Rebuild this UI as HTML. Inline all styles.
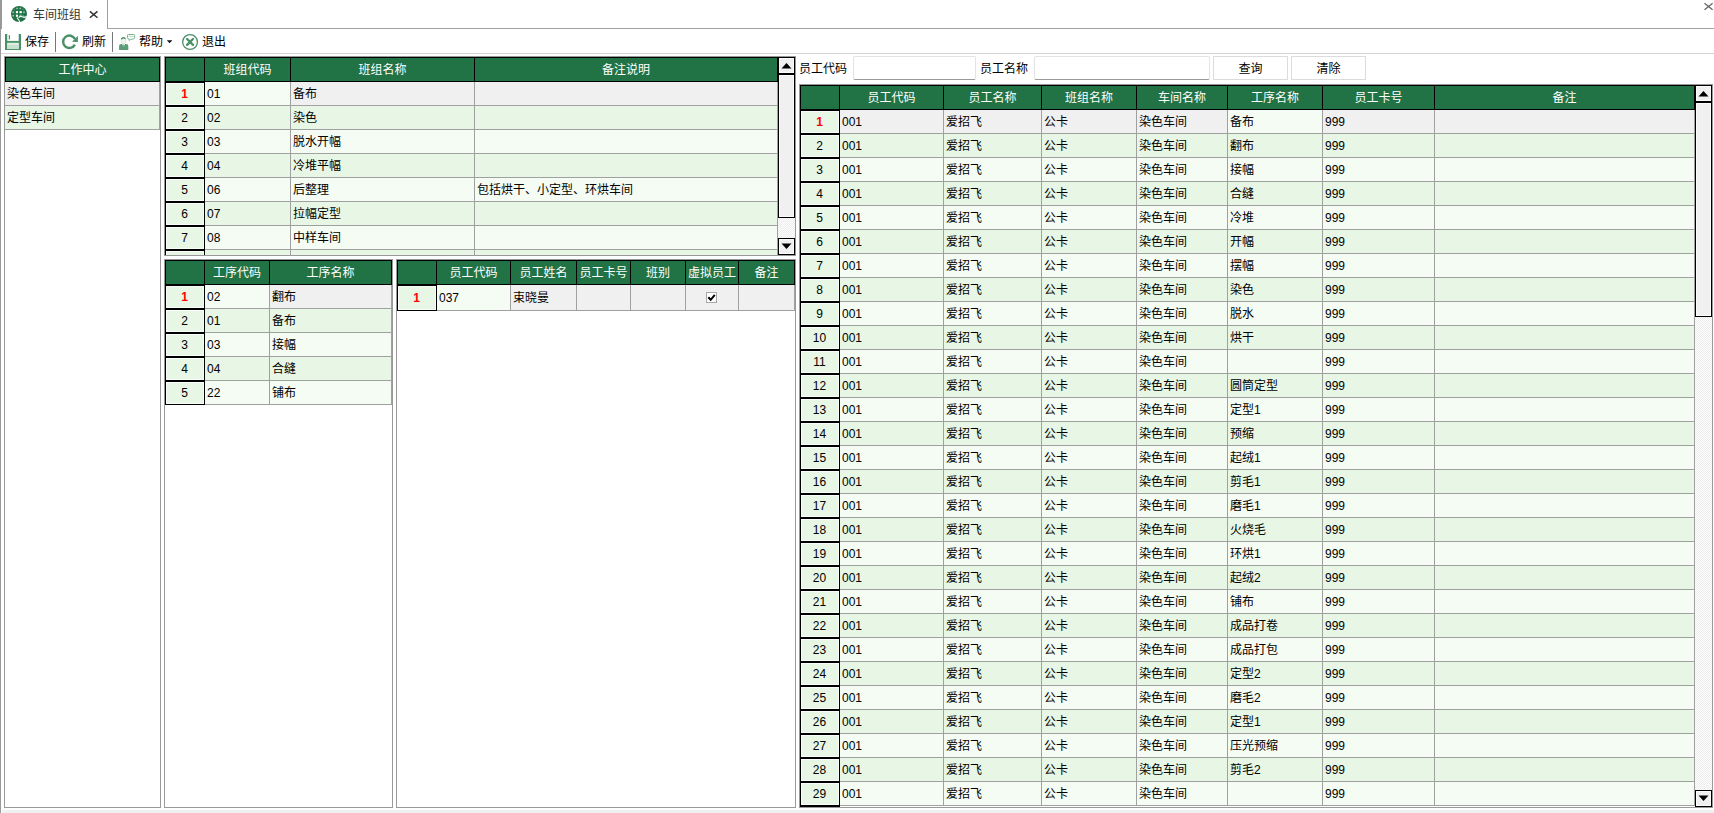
<!DOCTYPE html>
<html lang="zh-CN"><head><meta charset="utf-8"><title>车间班组</title>
<style>
html,body{margin:0;padding:0;background:#fff;}
body{width:1714px;height:813px;position:relative;overflow:hidden;font-family:"Liberation Sans","Noto Sans CJK SC",sans-serif;font-size:12px;color:#000;}
div{position:absolute;box-sizing:content-box;}
.grid{border:1px solid #999;background:#fff;overflow:hidden;}
.hc{background:#217346;color:#fff;text-align:center;line-height:25px;white-space:nowrap;overflow:hidden;}
.c{line-height:25px;padding-left:2px;white-space:nowrap;overflow:hidden;box-sizing:border-box;}
.rh{text-align:center;line-height:22px;font-size:12px;overflow:hidden;box-shadow:inset 0 0 0 1px rgba(255,255,255,.75);padding-right:1px;box-sizing:border-box;}
.r1{color:#f00;font-weight:bold;}
.vs{background:repeating-conic-gradient(#fff 0% 25%,#ececec 0% 50%) 0 0/2px 2px;}
.sl{background:#a0a0a0;}
.sb{background:#f0f0f0;border:1px solid #000;box-shadow:inset 0 0 0 1px rgba(255,255,255,.7);}
.sb svg{display:block}
.t{white-space:nowrap;line-height:16px;}
.inp{background:#fff;border:1px solid #e3e3e3;border-bottom:1px solid #9a9a9a;border-radius:2px;}
.btn{background:#fff;border:1px solid #dcdcdc;text-align:center;line-height:24px;}
</style></head><body>

<div style="left:0px;top:0px;width:1px;height:813px;background:#999"></div>
<div style="left:0px;top:0px;width:2px;height:29px;background:#999"></div>
<div style="left:107px;top:28px;width:1607px;height:1px;background:#a0a0a0"></div>
<div style="left:107px;top:0px;width:1px;height:29px;background:#a0a0a0"></div>
<div style="left:1px;top:53px;width:1713px;height:1px;background:#d4d4d4"></div>
<div style="left:2px;top:810px;width:1712px;height:3px;background:#f0f0f0"></div>
<svg style="position:absolute;left:10px;top:5px" width="18" height="18" viewBox="10 5 18 18">
<circle cx="19" cy="14" r="8" fill="#1f7346"/>
<g fill="#fff">
<rect x="15.9" y="11.1" width="2.1" height="2.1"/><rect x="19.5" y="11.1" width="2.3" height="2.1"/><rect x="15.9" y="14.7" width="2.1" height="2.1"/>
<g opacity="0.55"><rect x="12.4" y="11.4" width="1.7" height="1.7"/><rect x="23.1" y="11.4" width="1.7" height="1.7"/><rect x="12.4" y="14.9" width="1.7" height="1.6"/><rect x="19.6" y="14.8" width="1.9" height="1.5"/>
<rect x="16.2" y="7.7" width="1.7" height="1.5"/><rect x="19.4" y="7.7" width="1.7" height="1.5"/></g>
<g opacity="0.3"><rect x="13.7" y="8.6" width="1.2" height="1.2"/><rect x="22.6" y="14.9" width="1.4" height="1.4"/><rect x="22.3" y="8.6" width="1.2" height="1.2"/></g>
</g>
<path d="M16.9 17.6 Q18.6 19.2 19.8 22" stroke="#fff" stroke-width="1.1" fill="none"/>
<path d="M18.6 17.6 Q20.5 15.6 22.5 16.8 T26.6 16.2" stroke="#fff" stroke-width="1.3" fill="none" opacity="0.9"/>
</svg>
<div class="t" style="left:33px;top:7px;width:60px;height:16px;color:#333">车间班组</div>
<svg style="position:absolute;left:88px;top:9px" width="12" height="12" viewBox="88 9 12 12"><path d="M89.9 11.4 L97.5 17.8 M97.5 11.4 L89.9 17.8" stroke="#333" stroke-width="1.5" fill="none"/></svg>
<svg style="position:absolute;left:1702px;top:0px" width="12" height="12" viewBox="1702 0 12 12"><path d="M1704.5 3.2 L1712.6 9.8 M1712.6 3.2 L1704.5 9.8" stroke="#666" stroke-width="1.3" fill="none"/></svg>
<svg style="position:absolute;left:4px;top:33px" width="18" height="18" viewBox="4 33 18 18">
<rect x="5" y="34" width="2.3" height="16" fill="#4a9068"/><rect x="18.7" y="34" width="2.3" height="16" fill="#4a9068"/>
<rect x="5" y="40.9" width="16" height="1.9" fill="#4a9068"/>
<rect x="5" y="49" width="16" height="1" fill="#4a9068"/>
<rect x="7.3" y="43.6" width="11.4" height="5.4" fill="#c9dfd0"/>
<rect x="7.3" y="43.6" width="11.4" height="1.2" fill="#dfece3"/>
<rect x="7.3" y="34.5" width="1.3" height="5.5" fill="#dcebe1"/>
<rect x="8.9" y="35.2" width="1.1" height="4.2" fill="#4a9068"/>
</svg>
<div class="t" style="left:25px;top:34px;width:30px;height:16px;">保存</div>
<div style="left:55px;top:32px;width:1px;height:20px;background:#777"></div>
<svg style="position:absolute;left:61px;top:33px" width="18" height="18" viewBox="61 33 18 18">
<path d="M74.95 39.1 A6.2 6.2 0 1 0 74.88 44.61" stroke="#4a9068" stroke-width="2.4" fill="none"/>
<path d="M77.9 35.7 L77.9 41.9 L72 41.75 Z" fill="#4a9068"/>
</svg>
<div class="t" style="left:82px;top:34px;width:30px;height:16px;">刷新</div>
<div style="left:112px;top:32px;width:1px;height:20px;background:#777"></div>
<svg style="position:absolute;left:117px;top:33px" width="20" height="18" viewBox="117 33 20 18">
<path d="M119.1 49.9 V46 Q119.1 44.2 121 44 L122 44 L123.6 46.8 L125.2 44 L126.4 44 Q128.3 44.2 128.3 46 V49.9 Z" fill="#5a9c78"/>
<rect x="123.2" y="44.3" width="0.9" height="2.2" fill="#5a9c78"/>
<ellipse cx="123.5" cy="40.8" rx="2.4" ry="2.9" fill="#eef5f0" stroke="#c5dccd" stroke-width="0.6"/>
<path d="M120.9 39.6 Q120.9 36.9 123.6 36.9 Q125.9 36.9 125.9 39.2 Q124.5 39 123.6 38.2 Q122.5 39.4 120.9 39.6 Z" fill="#4a9068"/>
<path d="M128.4 34.5 H133.6 Q134.6 34.5 134.6 35.5 V37.6 Q134.6 38.7 133.4 38.9 L130.6 39.3 L129.4 40.6 L129.3 39.2 Q127.5 39 127.5 37.6 V35.5 Q127.5 34.5 128.4 34.5 Z" fill="#fff" stroke="#6aa583" stroke-width="0.9"/>
<line x1="128.6" y1="36.4" x2="133.6" y2="36.4" stroke="#a9cbb7" stroke-width="0.8"/>
</svg>
<div class="t" style="left:139px;top:34px;width:30px;height:16px;">帮助</div>
<svg style="position:absolute;left:165px;top:38px" width="10" height="7" viewBox="165 38 10 7"><path d="M166.8 40.2 L172.4 40.2 L169.6 43.3 Z" fill="#111"/></svg>
<svg style="position:absolute;left:181px;top:33px" width="18" height="18" viewBox="181 33 18 18">
<circle cx="190.04" cy="41.95" r="7.4" fill="#fff" stroke="#4a9068" stroke-width="1.3"/>
<path d="M187.1 39 L193 44.9 M193 39 L187.1 44.9" stroke="#4a9068" stroke-width="2.3" stroke-linecap="round"/>
</svg>
<div class="t" style="left:202px;top:34px;width:30px;height:16px;">退出</div>
<div class="grid" style="left:4px;top:56px;width:155px;height:750px">
<div style="left:0px;top:0px;width:155px;height:25px;background:#000"></div>
<div class="hc" style="left:1px;top:1px;width:153px;height:23px;">工作中心</div>
<div class="c" style="left:0px;top:25px;width:155px;height:24px;line-height:25px;background:#f0f0f0;border-right:1px solid #a0a0a0;border-bottom:1px solid #a0a0a0;">染色车间</div>
<div class="c" style="left:0px;top:49px;width:155px;height:24px;line-height:25px;background:#e7f6e5;border-right:1px solid #a0a0a0;border-bottom:1px solid #a0a0a0;">定型车间</div>
</div>
<div class="grid" style="left:164px;top:56px;width:630px;height:198px">
<div style="left:0px;top:0px;width:613px;height:25px;background:#000"></div>
<div style="left:1px;top:1px;width:38px;height:23px;background:#217346"></div>
<div class="hc" style="left:40px;top:1px;width:85px;height:23px;">班组代码</div>
<div class="hc" style="left:126px;top:1px;width:183px;height:23px;">班组名称</div>
<div class="hc" style="left:310px;top:1px;width:302px;height:23px;">备注说明</div>
<div style="left:0px;top:24px;width:40px;height:26px;background:#000"></div>
<div class="rh r1" style="left:1px;top:26px;width:38px;height:22px;background:#e7f6e5;line-height:22px;">1</div>
<div class="c" style="left:40px;top:25px;width:86px;height:24px;line-height:25px;background:#f5fcf4;border-right:1px solid #a0a0a0;border-bottom:1px solid #a0a0a0;">01</div>
<div class="c" style="left:126px;top:25px;width:184px;height:24px;line-height:25px;background:#f0f0f0;border-right:1px solid #a0a0a0;border-bottom:1px solid #a0a0a0;">备布</div>
<div class="c" style="left:310px;top:25px;width:303px;height:24px;line-height:25px;background:#f0f0f0;border-right:1px solid #a0a0a0;border-bottom:1px solid #a0a0a0;"></div>
<div style="left:0px;top:48px;width:40px;height:26px;background:#000"></div>
<div class="rh" style="left:1px;top:50px;width:38px;height:22px;background:#e7f6e5;line-height:22px;">2</div>
<div class="c" style="left:40px;top:49px;width:86px;height:24px;line-height:25px;background:#e7f6e5;border-right:1px solid #a0a0a0;border-bottom:1px solid #a0a0a0;">02</div>
<div class="c" style="left:126px;top:49px;width:184px;height:24px;line-height:25px;background:#e7f6e5;border-right:1px solid #a0a0a0;border-bottom:1px solid #a0a0a0;">染色</div>
<div class="c" style="left:310px;top:49px;width:303px;height:24px;line-height:25px;background:#e7f6e5;border-right:1px solid #a0a0a0;border-bottom:1px solid #a0a0a0;"></div>
<div style="left:0px;top:72px;width:40px;height:26px;background:#000"></div>
<div class="rh" style="left:1px;top:74px;width:38px;height:22px;background:#e7f6e5;line-height:22px;">3</div>
<div class="c" style="left:40px;top:73px;width:86px;height:24px;line-height:25px;background:#f5fcf4;border-right:1px solid #a0a0a0;border-bottom:1px solid #a0a0a0;">03</div>
<div class="c" style="left:126px;top:73px;width:184px;height:24px;line-height:25px;background:#f5fcf4;border-right:1px solid #a0a0a0;border-bottom:1px solid #a0a0a0;">脱水开幅</div>
<div class="c" style="left:310px;top:73px;width:303px;height:24px;line-height:25px;background:#f5fcf4;border-right:1px solid #a0a0a0;border-bottom:1px solid #a0a0a0;"></div>
<div style="left:0px;top:96px;width:40px;height:26px;background:#000"></div>
<div class="rh" style="left:1px;top:98px;width:38px;height:22px;background:#e7f6e5;line-height:22px;">4</div>
<div class="c" style="left:40px;top:97px;width:86px;height:24px;line-height:25px;background:#e7f6e5;border-right:1px solid #a0a0a0;border-bottom:1px solid #a0a0a0;">04</div>
<div class="c" style="left:126px;top:97px;width:184px;height:24px;line-height:25px;background:#e7f6e5;border-right:1px solid #a0a0a0;border-bottom:1px solid #a0a0a0;">冷堆平幅</div>
<div class="c" style="left:310px;top:97px;width:303px;height:24px;line-height:25px;background:#e7f6e5;border-right:1px solid #a0a0a0;border-bottom:1px solid #a0a0a0;"></div>
<div style="left:0px;top:120px;width:40px;height:26px;background:#000"></div>
<div class="rh" style="left:1px;top:122px;width:38px;height:22px;background:#e7f6e5;line-height:22px;">5</div>
<div class="c" style="left:40px;top:121px;width:86px;height:24px;line-height:25px;background:#f5fcf4;border-right:1px solid #a0a0a0;border-bottom:1px solid #a0a0a0;">06</div>
<div class="c" style="left:126px;top:121px;width:184px;height:24px;line-height:25px;background:#f5fcf4;border-right:1px solid #a0a0a0;border-bottom:1px solid #a0a0a0;">后整理</div>
<div class="c" style="left:310px;top:121px;width:303px;height:24px;line-height:25px;background:#f5fcf4;border-right:1px solid #a0a0a0;border-bottom:1px solid #a0a0a0;">包括烘干、小定型、环烘车间</div>
<div style="left:0px;top:144px;width:40px;height:26px;background:#000"></div>
<div class="rh" style="left:1px;top:146px;width:38px;height:22px;background:#e7f6e5;line-height:22px;">6</div>
<div class="c" style="left:40px;top:145px;width:86px;height:24px;line-height:25px;background:#e7f6e5;border-right:1px solid #a0a0a0;border-bottom:1px solid #a0a0a0;">07</div>
<div class="c" style="left:126px;top:145px;width:184px;height:24px;line-height:25px;background:#e7f6e5;border-right:1px solid #a0a0a0;border-bottom:1px solid #a0a0a0;">拉幅定型</div>
<div class="c" style="left:310px;top:145px;width:303px;height:24px;line-height:25px;background:#e7f6e5;border-right:1px solid #a0a0a0;border-bottom:1px solid #a0a0a0;"></div>
<div style="left:0px;top:168px;width:40px;height:26px;background:#000"></div>
<div class="rh" style="left:1px;top:170px;width:38px;height:22px;background:#e7f6e5;line-height:22px;">7</div>
<div class="c" style="left:40px;top:169px;width:86px;height:24px;line-height:25px;background:#f5fcf4;border-right:1px solid #a0a0a0;border-bottom:1px solid #a0a0a0;">08</div>
<div class="c" style="left:126px;top:169px;width:184px;height:24px;line-height:25px;background:#f5fcf4;border-right:1px solid #a0a0a0;border-bottom:1px solid #a0a0a0;">中样车间</div>
<div class="c" style="left:310px;top:169px;width:303px;height:24px;line-height:25px;background:#f5fcf4;border-right:1px solid #a0a0a0;border-bottom:1px solid #a0a0a0;"></div>
<div style="left:0px;top:192px;width:40px;height:26px;background:#000"></div>
<div class="rh" style="left:1px;top:194px;width:38px;height:22px;background:#e7f6e5;line-height:22px;">8</div>
<div class="c" style="left:40px;top:193px;width:86px;height:24px;line-height:25px;background:#e7f6e5;border-right:1px solid #a0a0a0;border-bottom:1px solid #a0a0a0;"></div>
<div class="c" style="left:126px;top:193px;width:184px;height:24px;line-height:25px;background:#e7f6e5;border-right:1px solid #a0a0a0;border-bottom:1px solid #a0a0a0;"></div>
<div class="c" style="left:310px;top:193px;width:303px;height:24px;line-height:25px;background:#e7f6e5;border-right:1px solid #a0a0a0;border-bottom:1px solid #a0a0a0;"></div>
</div>
<div class="vs" style="left:778px;top:57px;width:17px;height:198px">
<div class="sb" style="left:0;top:0;width:15px;height:15px"><svg width="15" height="15" viewBox="0 0 15 15"><path d="M2.5 10.5 L7.5 5 L12.5 10.5 Z" fill="#000"/></svg></div>
<div class="sb" style="left:0;top:16px;width:15px;height:142px;border-top-width:2px"></div>
<div class="sb" style="left:0;top:181px;width:15px;height:15px"><svg width="15" height="15" viewBox="0 0 15 15"><path d="M2.5 4.5 L7.5 10 L12.5 4.5 Z" fill="#000"/></svg></div>
</div>
<div class="grid" style="left:164px;top:259px;width:227px;height:547px">
<div style="left:0px;top:0px;width:227px;height:25px;background:#000"></div>
<div style="left:1px;top:1px;width:38px;height:23px;background:#217346"></div>
<div class="hc" style="left:40px;top:1px;width:64px;height:23px;">工序代码</div>
<div class="hc" style="left:105px;top:1px;width:121px;height:23px;">工序名称</div>
<div style="left:0px;top:24px;width:40px;height:26px;background:#000"></div>
<div class="rh r1" style="left:1px;top:26px;width:38px;height:22px;background:#e7f6e5;line-height:22px;">1</div>
<div class="c" style="left:40px;top:25px;width:65px;height:24px;line-height:25px;background:#f5fcf4;border-right:1px solid #a0a0a0;border-bottom:1px solid #a0a0a0;">02</div>
<div class="c" style="left:105px;top:25px;width:122px;height:24px;line-height:25px;background:#f0f0f0;border-right:1px solid #a0a0a0;border-bottom:1px solid #a0a0a0;">翻布</div>
<div style="left:0px;top:48px;width:40px;height:26px;background:#000"></div>
<div class="rh" style="left:1px;top:50px;width:38px;height:22px;background:#e7f6e5;line-height:22px;">2</div>
<div class="c" style="left:40px;top:49px;width:65px;height:24px;line-height:25px;background:#e7f6e5;border-right:1px solid #a0a0a0;border-bottom:1px solid #a0a0a0;">01</div>
<div class="c" style="left:105px;top:49px;width:122px;height:24px;line-height:25px;background:#e7f6e5;border-right:1px solid #a0a0a0;border-bottom:1px solid #a0a0a0;">备布</div>
<div style="left:0px;top:72px;width:40px;height:26px;background:#000"></div>
<div class="rh" style="left:1px;top:74px;width:38px;height:22px;background:#e7f6e5;line-height:22px;">3</div>
<div class="c" style="left:40px;top:73px;width:65px;height:24px;line-height:25px;background:#f5fcf4;border-right:1px solid #a0a0a0;border-bottom:1px solid #a0a0a0;">03</div>
<div class="c" style="left:105px;top:73px;width:122px;height:24px;line-height:25px;background:#f5fcf4;border-right:1px solid #a0a0a0;border-bottom:1px solid #a0a0a0;">接幅</div>
<div style="left:0px;top:96px;width:40px;height:26px;background:#000"></div>
<div class="rh" style="left:1px;top:98px;width:38px;height:22px;background:#e7f6e5;line-height:22px;">4</div>
<div class="c" style="left:40px;top:97px;width:65px;height:24px;line-height:25px;background:#e7f6e5;border-right:1px solid #a0a0a0;border-bottom:1px solid #a0a0a0;">04</div>
<div class="c" style="left:105px;top:97px;width:122px;height:24px;line-height:25px;background:#e7f6e5;border-right:1px solid #a0a0a0;border-bottom:1px solid #a0a0a0;">合缝</div>
<div style="left:0px;top:120px;width:40px;height:25px;background:#000"></div>
<div class="rh" style="left:1px;top:122px;width:38px;height:22px;background:#e7f6e5;line-height:22px;">5</div>
<div class="c" style="left:40px;top:121px;width:65px;height:24px;line-height:25px;background:#f5fcf4;border-right:1px solid #a0a0a0;border-bottom:1px solid #a0a0a0;">22</div>
<div class="c" style="left:105px;top:121px;width:122px;height:24px;line-height:25px;background:#f5fcf4;border-right:1px solid #a0a0a0;border-bottom:1px solid #a0a0a0;">铺布</div>
</div>
<div class="grid" style="left:396px;top:259px;width:398px;height:547px">
<div style="left:0px;top:0px;width:398px;height:25px;background:#000"></div>
<div style="left:1px;top:1px;width:38px;height:23px;background:#217346"></div>
<div class="hc" style="left:40px;top:1px;width:73px;height:23px;">员工代码</div>
<div class="hc" style="left:114px;top:1px;width:65px;height:23px;">员工姓名</div>
<div class="hc" style="left:180px;top:1px;width:53px;height:23px;">员工卡号</div>
<div class="hc" style="left:234px;top:1px;width:54px;height:23px;">班别</div>
<div class="hc" style="left:289px;top:1px;width:52px;height:23px;">虚拟员工</div>
<div class="hc" style="left:342px;top:1px;width:55px;height:23px;">备注</div>
<div style="left:0px;top:24px;width:40px;height:27px;background:#000"></div>
<div class="rh r1" style="left:1px;top:26px;width:38px;height:24px;background:#e7f6e5;line-height:24px;">1</div>
<div class="c" style="left:40px;top:25px;width:74px;height:26px;line-height:27px;background:#f5fcf4;border-right:1px solid #a0a0a0;border-bottom:1px solid #a0a0a0;">037</div>
<div class="c" style="left:114px;top:25px;width:66px;height:26px;line-height:27px;background:#f0f0f0;border-right:1px solid #a0a0a0;border-bottom:1px solid #a0a0a0;">束晓曼</div>
<div class="c" style="left:180px;top:25px;width:54px;height:26px;line-height:27px;background:#f0f0f0;border-right:1px solid #a0a0a0;border-bottom:1px solid #a0a0a0;"></div>
<div class="c" style="left:234px;top:25px;width:55px;height:26px;line-height:27px;background:#f0f0f0;border-right:1px solid #a0a0a0;border-bottom:1px solid #a0a0a0;"></div>
<div class="c" style="left:289px;top:25px;width:53px;height:26px;line-height:27px;background:#f0f0f0;border-right:1px solid #a0a0a0;border-bottom:1px solid #a0a0a0;"></div>
<div class="c" style="left:342px;top:25px;width:56px;height:26px;line-height:27px;background:#f0f0f0;border-right:1px solid #a0a0a0;border-bottom:1px solid #a0a0a0;"></div>
</div>
<div style="left:706px;top:292px;width:9px;height:9px;border:1px solid #a8a8a8;background:#fff"><svg width="9" height="9" viewBox="0 0 9 9" style="display:block"><path d="M1.3 4.2 L3.7 6.8 L7.8 1.8" stroke="#000" stroke-width="2" fill="none"/></svg></div>
<div class="t" style="left:799px;top:61px;width:60px;height:16px;">员工代码</div>
<div class="inp" style="left:853px;top:56px;width:121px;height:22px;"></div>
<div class="t" style="left:980px;top:61px;width:60px;height:16px;">员工名称</div>
<div class="inp" style="left:1034px;top:56px;width:174px;height:22px;"></div>
<div class="btn" style="left:1213px;top:56px;width:73px;height:22px;">查询</div>
<div class="btn" style="left:1291px;top:56px;width:73px;height:22px;">清除</div>
<div class="grid" style="left:799px;top:84px;width:912px;height:722px">
<div style="left:0px;top:0px;width:895px;height:25px;background:#000"></div>
<div style="left:1px;top:1px;width:38px;height:23px;background:#217346"></div>
<div class="hc" style="left:40px;top:1px;width:103px;height:23px;">员工代码</div>
<div class="hc" style="left:144px;top:1px;width:97px;height:23px;">员工名称</div>
<div class="hc" style="left:242px;top:1px;width:94px;height:23px;">班组名称</div>
<div class="hc" style="left:337px;top:1px;width:90px;height:23px;">车间名称</div>
<div class="hc" style="left:428px;top:1px;width:94px;height:23px;">工序名称</div>
<div class="hc" style="left:523px;top:1px;width:111px;height:23px;">员工卡号</div>
<div class="hc" style="left:635px;top:1px;width:259px;height:23px;">备注</div>
<div style="left:0px;top:24px;width:40px;height:26px;background:#000"></div>
<div class="rh r1" style="left:1px;top:26px;width:38px;height:22px;background:#e7f6e5;line-height:22px;">1</div>
<div class="c" style="left:40px;top:25px;width:104px;height:24px;line-height:25px;background:#f0f0f0;border-right:1px solid #a0a0a0;border-bottom:1px solid #a0a0a0;">001</div>
<div class="c" style="left:144px;top:25px;width:98px;height:24px;line-height:25px;background:#f0f0f0;border-right:1px solid #a0a0a0;border-bottom:1px solid #a0a0a0;">爱招飞</div>
<div class="c" style="left:242px;top:25px;width:95px;height:24px;line-height:25px;background:#f0f0f0;border-right:1px solid #a0a0a0;border-bottom:1px solid #a0a0a0;">公卡</div>
<div class="c" style="left:337px;top:25px;width:91px;height:24px;line-height:25px;background:#f0f0f0;border-right:1px solid #a0a0a0;border-bottom:1px solid #a0a0a0;">染色车间</div>
<div class="c" style="left:428px;top:25px;width:95px;height:24px;line-height:25px;background:#f5fcf4;border-right:1px solid #a0a0a0;border-bottom:1px solid #a0a0a0;">备布</div>
<div class="c" style="left:523px;top:25px;width:112px;height:24px;line-height:25px;background:#f0f0f0;border-right:1px solid #a0a0a0;border-bottom:1px solid #a0a0a0;">999</div>
<div class="c" style="left:635px;top:25px;width:260px;height:24px;line-height:25px;background:#f0f0f0;border-right:1px solid #a0a0a0;border-bottom:1px solid #a0a0a0;"></div>
<div style="left:0px;top:48px;width:40px;height:26px;background:#000"></div>
<div class="rh" style="left:1px;top:50px;width:38px;height:22px;background:#e7f6e5;line-height:22px;">2</div>
<div class="c" style="left:40px;top:49px;width:104px;height:24px;line-height:25px;background:#e7f6e5;border-right:1px solid #a0a0a0;border-bottom:1px solid #a0a0a0;">001</div>
<div class="c" style="left:144px;top:49px;width:98px;height:24px;line-height:25px;background:#e7f6e5;border-right:1px solid #a0a0a0;border-bottom:1px solid #a0a0a0;">爱招飞</div>
<div class="c" style="left:242px;top:49px;width:95px;height:24px;line-height:25px;background:#e7f6e5;border-right:1px solid #a0a0a0;border-bottom:1px solid #a0a0a0;">公卡</div>
<div class="c" style="left:337px;top:49px;width:91px;height:24px;line-height:25px;background:#e7f6e5;border-right:1px solid #a0a0a0;border-bottom:1px solid #a0a0a0;">染色车间</div>
<div class="c" style="left:428px;top:49px;width:95px;height:24px;line-height:25px;background:#e7f6e5;border-right:1px solid #a0a0a0;border-bottom:1px solid #a0a0a0;">翻布</div>
<div class="c" style="left:523px;top:49px;width:112px;height:24px;line-height:25px;background:#e7f6e5;border-right:1px solid #a0a0a0;border-bottom:1px solid #a0a0a0;">999</div>
<div class="c" style="left:635px;top:49px;width:260px;height:24px;line-height:25px;background:#e7f6e5;border-right:1px solid #a0a0a0;border-bottom:1px solid #a0a0a0;"></div>
<div style="left:0px;top:72px;width:40px;height:26px;background:#000"></div>
<div class="rh" style="left:1px;top:74px;width:38px;height:22px;background:#e7f6e5;line-height:22px;">3</div>
<div class="c" style="left:40px;top:73px;width:104px;height:24px;line-height:25px;background:#f5fcf4;border-right:1px solid #a0a0a0;border-bottom:1px solid #a0a0a0;">001</div>
<div class="c" style="left:144px;top:73px;width:98px;height:24px;line-height:25px;background:#f5fcf4;border-right:1px solid #a0a0a0;border-bottom:1px solid #a0a0a0;">爱招飞</div>
<div class="c" style="left:242px;top:73px;width:95px;height:24px;line-height:25px;background:#f5fcf4;border-right:1px solid #a0a0a0;border-bottom:1px solid #a0a0a0;">公卡</div>
<div class="c" style="left:337px;top:73px;width:91px;height:24px;line-height:25px;background:#f5fcf4;border-right:1px solid #a0a0a0;border-bottom:1px solid #a0a0a0;">染色车间</div>
<div class="c" style="left:428px;top:73px;width:95px;height:24px;line-height:25px;background:#f5fcf4;border-right:1px solid #a0a0a0;border-bottom:1px solid #a0a0a0;">接幅</div>
<div class="c" style="left:523px;top:73px;width:112px;height:24px;line-height:25px;background:#f5fcf4;border-right:1px solid #a0a0a0;border-bottom:1px solid #a0a0a0;">999</div>
<div class="c" style="left:635px;top:73px;width:260px;height:24px;line-height:25px;background:#f5fcf4;border-right:1px solid #a0a0a0;border-bottom:1px solid #a0a0a0;"></div>
<div style="left:0px;top:96px;width:40px;height:26px;background:#000"></div>
<div class="rh" style="left:1px;top:98px;width:38px;height:22px;background:#e7f6e5;line-height:22px;">4</div>
<div class="c" style="left:40px;top:97px;width:104px;height:24px;line-height:25px;background:#e7f6e5;border-right:1px solid #a0a0a0;border-bottom:1px solid #a0a0a0;">001</div>
<div class="c" style="left:144px;top:97px;width:98px;height:24px;line-height:25px;background:#e7f6e5;border-right:1px solid #a0a0a0;border-bottom:1px solid #a0a0a0;">爱招飞</div>
<div class="c" style="left:242px;top:97px;width:95px;height:24px;line-height:25px;background:#e7f6e5;border-right:1px solid #a0a0a0;border-bottom:1px solid #a0a0a0;">公卡</div>
<div class="c" style="left:337px;top:97px;width:91px;height:24px;line-height:25px;background:#e7f6e5;border-right:1px solid #a0a0a0;border-bottom:1px solid #a0a0a0;">染色车间</div>
<div class="c" style="left:428px;top:97px;width:95px;height:24px;line-height:25px;background:#e7f6e5;border-right:1px solid #a0a0a0;border-bottom:1px solid #a0a0a0;">合缝</div>
<div class="c" style="left:523px;top:97px;width:112px;height:24px;line-height:25px;background:#e7f6e5;border-right:1px solid #a0a0a0;border-bottom:1px solid #a0a0a0;">999</div>
<div class="c" style="left:635px;top:97px;width:260px;height:24px;line-height:25px;background:#e7f6e5;border-right:1px solid #a0a0a0;border-bottom:1px solid #a0a0a0;"></div>
<div style="left:0px;top:120px;width:40px;height:26px;background:#000"></div>
<div class="rh" style="left:1px;top:122px;width:38px;height:22px;background:#e7f6e5;line-height:22px;">5</div>
<div class="c" style="left:40px;top:121px;width:104px;height:24px;line-height:25px;background:#f5fcf4;border-right:1px solid #a0a0a0;border-bottom:1px solid #a0a0a0;">001</div>
<div class="c" style="left:144px;top:121px;width:98px;height:24px;line-height:25px;background:#f5fcf4;border-right:1px solid #a0a0a0;border-bottom:1px solid #a0a0a0;">爱招飞</div>
<div class="c" style="left:242px;top:121px;width:95px;height:24px;line-height:25px;background:#f5fcf4;border-right:1px solid #a0a0a0;border-bottom:1px solid #a0a0a0;">公卡</div>
<div class="c" style="left:337px;top:121px;width:91px;height:24px;line-height:25px;background:#f5fcf4;border-right:1px solid #a0a0a0;border-bottom:1px solid #a0a0a0;">染色车间</div>
<div class="c" style="left:428px;top:121px;width:95px;height:24px;line-height:25px;background:#f5fcf4;border-right:1px solid #a0a0a0;border-bottom:1px solid #a0a0a0;">冷堆</div>
<div class="c" style="left:523px;top:121px;width:112px;height:24px;line-height:25px;background:#f5fcf4;border-right:1px solid #a0a0a0;border-bottom:1px solid #a0a0a0;">999</div>
<div class="c" style="left:635px;top:121px;width:260px;height:24px;line-height:25px;background:#f5fcf4;border-right:1px solid #a0a0a0;border-bottom:1px solid #a0a0a0;"></div>
<div style="left:0px;top:144px;width:40px;height:26px;background:#000"></div>
<div class="rh" style="left:1px;top:146px;width:38px;height:22px;background:#e7f6e5;line-height:22px;">6</div>
<div class="c" style="left:40px;top:145px;width:104px;height:24px;line-height:25px;background:#e7f6e5;border-right:1px solid #a0a0a0;border-bottom:1px solid #a0a0a0;">001</div>
<div class="c" style="left:144px;top:145px;width:98px;height:24px;line-height:25px;background:#e7f6e5;border-right:1px solid #a0a0a0;border-bottom:1px solid #a0a0a0;">爱招飞</div>
<div class="c" style="left:242px;top:145px;width:95px;height:24px;line-height:25px;background:#e7f6e5;border-right:1px solid #a0a0a0;border-bottom:1px solid #a0a0a0;">公卡</div>
<div class="c" style="left:337px;top:145px;width:91px;height:24px;line-height:25px;background:#e7f6e5;border-right:1px solid #a0a0a0;border-bottom:1px solid #a0a0a0;">染色车间</div>
<div class="c" style="left:428px;top:145px;width:95px;height:24px;line-height:25px;background:#e7f6e5;border-right:1px solid #a0a0a0;border-bottom:1px solid #a0a0a0;">开幅</div>
<div class="c" style="left:523px;top:145px;width:112px;height:24px;line-height:25px;background:#e7f6e5;border-right:1px solid #a0a0a0;border-bottom:1px solid #a0a0a0;">999</div>
<div class="c" style="left:635px;top:145px;width:260px;height:24px;line-height:25px;background:#e7f6e5;border-right:1px solid #a0a0a0;border-bottom:1px solid #a0a0a0;"></div>
<div style="left:0px;top:168px;width:40px;height:26px;background:#000"></div>
<div class="rh" style="left:1px;top:170px;width:38px;height:22px;background:#e7f6e5;line-height:22px;">7</div>
<div class="c" style="left:40px;top:169px;width:104px;height:24px;line-height:25px;background:#f5fcf4;border-right:1px solid #a0a0a0;border-bottom:1px solid #a0a0a0;">001</div>
<div class="c" style="left:144px;top:169px;width:98px;height:24px;line-height:25px;background:#f5fcf4;border-right:1px solid #a0a0a0;border-bottom:1px solid #a0a0a0;">爱招飞</div>
<div class="c" style="left:242px;top:169px;width:95px;height:24px;line-height:25px;background:#f5fcf4;border-right:1px solid #a0a0a0;border-bottom:1px solid #a0a0a0;">公卡</div>
<div class="c" style="left:337px;top:169px;width:91px;height:24px;line-height:25px;background:#f5fcf4;border-right:1px solid #a0a0a0;border-bottom:1px solid #a0a0a0;">染色车间</div>
<div class="c" style="left:428px;top:169px;width:95px;height:24px;line-height:25px;background:#f5fcf4;border-right:1px solid #a0a0a0;border-bottom:1px solid #a0a0a0;">摆幅</div>
<div class="c" style="left:523px;top:169px;width:112px;height:24px;line-height:25px;background:#f5fcf4;border-right:1px solid #a0a0a0;border-bottom:1px solid #a0a0a0;">999</div>
<div class="c" style="left:635px;top:169px;width:260px;height:24px;line-height:25px;background:#f5fcf4;border-right:1px solid #a0a0a0;border-bottom:1px solid #a0a0a0;"></div>
<div style="left:0px;top:192px;width:40px;height:26px;background:#000"></div>
<div class="rh" style="left:1px;top:194px;width:38px;height:22px;background:#e7f6e5;line-height:22px;">8</div>
<div class="c" style="left:40px;top:193px;width:104px;height:24px;line-height:25px;background:#e7f6e5;border-right:1px solid #a0a0a0;border-bottom:1px solid #a0a0a0;">001</div>
<div class="c" style="left:144px;top:193px;width:98px;height:24px;line-height:25px;background:#e7f6e5;border-right:1px solid #a0a0a0;border-bottom:1px solid #a0a0a0;">爱招飞</div>
<div class="c" style="left:242px;top:193px;width:95px;height:24px;line-height:25px;background:#e7f6e5;border-right:1px solid #a0a0a0;border-bottom:1px solid #a0a0a0;">公卡</div>
<div class="c" style="left:337px;top:193px;width:91px;height:24px;line-height:25px;background:#e7f6e5;border-right:1px solid #a0a0a0;border-bottom:1px solid #a0a0a0;">染色车间</div>
<div class="c" style="left:428px;top:193px;width:95px;height:24px;line-height:25px;background:#e7f6e5;border-right:1px solid #a0a0a0;border-bottom:1px solid #a0a0a0;">染色</div>
<div class="c" style="left:523px;top:193px;width:112px;height:24px;line-height:25px;background:#e7f6e5;border-right:1px solid #a0a0a0;border-bottom:1px solid #a0a0a0;">999</div>
<div class="c" style="left:635px;top:193px;width:260px;height:24px;line-height:25px;background:#e7f6e5;border-right:1px solid #a0a0a0;border-bottom:1px solid #a0a0a0;"></div>
<div style="left:0px;top:216px;width:40px;height:26px;background:#000"></div>
<div class="rh" style="left:1px;top:218px;width:38px;height:22px;background:#e7f6e5;line-height:22px;">9</div>
<div class="c" style="left:40px;top:217px;width:104px;height:24px;line-height:25px;background:#f5fcf4;border-right:1px solid #a0a0a0;border-bottom:1px solid #a0a0a0;">001</div>
<div class="c" style="left:144px;top:217px;width:98px;height:24px;line-height:25px;background:#f5fcf4;border-right:1px solid #a0a0a0;border-bottom:1px solid #a0a0a0;">爱招飞</div>
<div class="c" style="left:242px;top:217px;width:95px;height:24px;line-height:25px;background:#f5fcf4;border-right:1px solid #a0a0a0;border-bottom:1px solid #a0a0a0;">公卡</div>
<div class="c" style="left:337px;top:217px;width:91px;height:24px;line-height:25px;background:#f5fcf4;border-right:1px solid #a0a0a0;border-bottom:1px solid #a0a0a0;">染色车间</div>
<div class="c" style="left:428px;top:217px;width:95px;height:24px;line-height:25px;background:#f5fcf4;border-right:1px solid #a0a0a0;border-bottom:1px solid #a0a0a0;">脱水</div>
<div class="c" style="left:523px;top:217px;width:112px;height:24px;line-height:25px;background:#f5fcf4;border-right:1px solid #a0a0a0;border-bottom:1px solid #a0a0a0;">999</div>
<div class="c" style="left:635px;top:217px;width:260px;height:24px;line-height:25px;background:#f5fcf4;border-right:1px solid #a0a0a0;border-bottom:1px solid #a0a0a0;"></div>
<div style="left:0px;top:240px;width:40px;height:26px;background:#000"></div>
<div class="rh" style="left:1px;top:242px;width:38px;height:22px;background:#e7f6e5;line-height:22px;">10</div>
<div class="c" style="left:40px;top:241px;width:104px;height:24px;line-height:25px;background:#e7f6e5;border-right:1px solid #a0a0a0;border-bottom:1px solid #a0a0a0;">001</div>
<div class="c" style="left:144px;top:241px;width:98px;height:24px;line-height:25px;background:#e7f6e5;border-right:1px solid #a0a0a0;border-bottom:1px solid #a0a0a0;">爱招飞</div>
<div class="c" style="left:242px;top:241px;width:95px;height:24px;line-height:25px;background:#e7f6e5;border-right:1px solid #a0a0a0;border-bottom:1px solid #a0a0a0;">公卡</div>
<div class="c" style="left:337px;top:241px;width:91px;height:24px;line-height:25px;background:#e7f6e5;border-right:1px solid #a0a0a0;border-bottom:1px solid #a0a0a0;">染色车间</div>
<div class="c" style="left:428px;top:241px;width:95px;height:24px;line-height:25px;background:#e7f6e5;border-right:1px solid #a0a0a0;border-bottom:1px solid #a0a0a0;">烘干</div>
<div class="c" style="left:523px;top:241px;width:112px;height:24px;line-height:25px;background:#e7f6e5;border-right:1px solid #a0a0a0;border-bottom:1px solid #a0a0a0;">999</div>
<div class="c" style="left:635px;top:241px;width:260px;height:24px;line-height:25px;background:#e7f6e5;border-right:1px solid #a0a0a0;border-bottom:1px solid #a0a0a0;"></div>
<div style="left:0px;top:264px;width:40px;height:26px;background:#000"></div>
<div class="rh" style="left:1px;top:266px;width:38px;height:22px;background:#e7f6e5;line-height:22px;">11</div>
<div class="c" style="left:40px;top:265px;width:104px;height:24px;line-height:25px;background:#f5fcf4;border-right:1px solid #a0a0a0;border-bottom:1px solid #a0a0a0;">001</div>
<div class="c" style="left:144px;top:265px;width:98px;height:24px;line-height:25px;background:#f5fcf4;border-right:1px solid #a0a0a0;border-bottom:1px solid #a0a0a0;">爱招飞</div>
<div class="c" style="left:242px;top:265px;width:95px;height:24px;line-height:25px;background:#f5fcf4;border-right:1px solid #a0a0a0;border-bottom:1px solid #a0a0a0;">公卡</div>
<div class="c" style="left:337px;top:265px;width:91px;height:24px;line-height:25px;background:#f5fcf4;border-right:1px solid #a0a0a0;border-bottom:1px solid #a0a0a0;">染色车间</div>
<div class="c" style="left:428px;top:265px;width:95px;height:24px;line-height:25px;background:#f5fcf4;border-right:1px solid #a0a0a0;border-bottom:1px solid #a0a0a0;"></div>
<div class="c" style="left:523px;top:265px;width:112px;height:24px;line-height:25px;background:#f5fcf4;border-right:1px solid #a0a0a0;border-bottom:1px solid #a0a0a0;">999</div>
<div class="c" style="left:635px;top:265px;width:260px;height:24px;line-height:25px;background:#f5fcf4;border-right:1px solid #a0a0a0;border-bottom:1px solid #a0a0a0;"></div>
<div style="left:0px;top:288px;width:40px;height:26px;background:#000"></div>
<div class="rh" style="left:1px;top:290px;width:38px;height:22px;background:#e7f6e5;line-height:22px;">12</div>
<div class="c" style="left:40px;top:289px;width:104px;height:24px;line-height:25px;background:#e7f6e5;border-right:1px solid #a0a0a0;border-bottom:1px solid #a0a0a0;">001</div>
<div class="c" style="left:144px;top:289px;width:98px;height:24px;line-height:25px;background:#e7f6e5;border-right:1px solid #a0a0a0;border-bottom:1px solid #a0a0a0;">爱招飞</div>
<div class="c" style="left:242px;top:289px;width:95px;height:24px;line-height:25px;background:#e7f6e5;border-right:1px solid #a0a0a0;border-bottom:1px solid #a0a0a0;">公卡</div>
<div class="c" style="left:337px;top:289px;width:91px;height:24px;line-height:25px;background:#e7f6e5;border-right:1px solid #a0a0a0;border-bottom:1px solid #a0a0a0;">染色车间</div>
<div class="c" style="left:428px;top:289px;width:95px;height:24px;line-height:25px;background:#e7f6e5;border-right:1px solid #a0a0a0;border-bottom:1px solid #a0a0a0;">圆筒定型</div>
<div class="c" style="left:523px;top:289px;width:112px;height:24px;line-height:25px;background:#e7f6e5;border-right:1px solid #a0a0a0;border-bottom:1px solid #a0a0a0;">999</div>
<div class="c" style="left:635px;top:289px;width:260px;height:24px;line-height:25px;background:#e7f6e5;border-right:1px solid #a0a0a0;border-bottom:1px solid #a0a0a0;"></div>
<div style="left:0px;top:312px;width:40px;height:26px;background:#000"></div>
<div class="rh" style="left:1px;top:314px;width:38px;height:22px;background:#e7f6e5;line-height:22px;">13</div>
<div class="c" style="left:40px;top:313px;width:104px;height:24px;line-height:25px;background:#f5fcf4;border-right:1px solid #a0a0a0;border-bottom:1px solid #a0a0a0;">001</div>
<div class="c" style="left:144px;top:313px;width:98px;height:24px;line-height:25px;background:#f5fcf4;border-right:1px solid #a0a0a0;border-bottom:1px solid #a0a0a0;">爱招飞</div>
<div class="c" style="left:242px;top:313px;width:95px;height:24px;line-height:25px;background:#f5fcf4;border-right:1px solid #a0a0a0;border-bottom:1px solid #a0a0a0;">公卡</div>
<div class="c" style="left:337px;top:313px;width:91px;height:24px;line-height:25px;background:#f5fcf4;border-right:1px solid #a0a0a0;border-bottom:1px solid #a0a0a0;">染色车间</div>
<div class="c" style="left:428px;top:313px;width:95px;height:24px;line-height:25px;background:#f5fcf4;border-right:1px solid #a0a0a0;border-bottom:1px solid #a0a0a0;">定型1</div>
<div class="c" style="left:523px;top:313px;width:112px;height:24px;line-height:25px;background:#f5fcf4;border-right:1px solid #a0a0a0;border-bottom:1px solid #a0a0a0;">999</div>
<div class="c" style="left:635px;top:313px;width:260px;height:24px;line-height:25px;background:#f5fcf4;border-right:1px solid #a0a0a0;border-bottom:1px solid #a0a0a0;"></div>
<div style="left:0px;top:336px;width:40px;height:26px;background:#000"></div>
<div class="rh" style="left:1px;top:338px;width:38px;height:22px;background:#e7f6e5;line-height:22px;">14</div>
<div class="c" style="left:40px;top:337px;width:104px;height:24px;line-height:25px;background:#e7f6e5;border-right:1px solid #a0a0a0;border-bottom:1px solid #a0a0a0;">001</div>
<div class="c" style="left:144px;top:337px;width:98px;height:24px;line-height:25px;background:#e7f6e5;border-right:1px solid #a0a0a0;border-bottom:1px solid #a0a0a0;">爱招飞</div>
<div class="c" style="left:242px;top:337px;width:95px;height:24px;line-height:25px;background:#e7f6e5;border-right:1px solid #a0a0a0;border-bottom:1px solid #a0a0a0;">公卡</div>
<div class="c" style="left:337px;top:337px;width:91px;height:24px;line-height:25px;background:#e7f6e5;border-right:1px solid #a0a0a0;border-bottom:1px solid #a0a0a0;">染色车间</div>
<div class="c" style="left:428px;top:337px;width:95px;height:24px;line-height:25px;background:#e7f6e5;border-right:1px solid #a0a0a0;border-bottom:1px solid #a0a0a0;">预缩</div>
<div class="c" style="left:523px;top:337px;width:112px;height:24px;line-height:25px;background:#e7f6e5;border-right:1px solid #a0a0a0;border-bottom:1px solid #a0a0a0;">999</div>
<div class="c" style="left:635px;top:337px;width:260px;height:24px;line-height:25px;background:#e7f6e5;border-right:1px solid #a0a0a0;border-bottom:1px solid #a0a0a0;"></div>
<div style="left:0px;top:360px;width:40px;height:26px;background:#000"></div>
<div class="rh" style="left:1px;top:362px;width:38px;height:22px;background:#e7f6e5;line-height:22px;">15</div>
<div class="c" style="left:40px;top:361px;width:104px;height:24px;line-height:25px;background:#f5fcf4;border-right:1px solid #a0a0a0;border-bottom:1px solid #a0a0a0;">001</div>
<div class="c" style="left:144px;top:361px;width:98px;height:24px;line-height:25px;background:#f5fcf4;border-right:1px solid #a0a0a0;border-bottom:1px solid #a0a0a0;">爱招飞</div>
<div class="c" style="left:242px;top:361px;width:95px;height:24px;line-height:25px;background:#f5fcf4;border-right:1px solid #a0a0a0;border-bottom:1px solid #a0a0a0;">公卡</div>
<div class="c" style="left:337px;top:361px;width:91px;height:24px;line-height:25px;background:#f5fcf4;border-right:1px solid #a0a0a0;border-bottom:1px solid #a0a0a0;">染色车间</div>
<div class="c" style="left:428px;top:361px;width:95px;height:24px;line-height:25px;background:#f5fcf4;border-right:1px solid #a0a0a0;border-bottom:1px solid #a0a0a0;">起绒1</div>
<div class="c" style="left:523px;top:361px;width:112px;height:24px;line-height:25px;background:#f5fcf4;border-right:1px solid #a0a0a0;border-bottom:1px solid #a0a0a0;">999</div>
<div class="c" style="left:635px;top:361px;width:260px;height:24px;line-height:25px;background:#f5fcf4;border-right:1px solid #a0a0a0;border-bottom:1px solid #a0a0a0;"></div>
<div style="left:0px;top:384px;width:40px;height:26px;background:#000"></div>
<div class="rh" style="left:1px;top:386px;width:38px;height:22px;background:#e7f6e5;line-height:22px;">16</div>
<div class="c" style="left:40px;top:385px;width:104px;height:24px;line-height:25px;background:#e7f6e5;border-right:1px solid #a0a0a0;border-bottom:1px solid #a0a0a0;">001</div>
<div class="c" style="left:144px;top:385px;width:98px;height:24px;line-height:25px;background:#e7f6e5;border-right:1px solid #a0a0a0;border-bottom:1px solid #a0a0a0;">爱招飞</div>
<div class="c" style="left:242px;top:385px;width:95px;height:24px;line-height:25px;background:#e7f6e5;border-right:1px solid #a0a0a0;border-bottom:1px solid #a0a0a0;">公卡</div>
<div class="c" style="left:337px;top:385px;width:91px;height:24px;line-height:25px;background:#e7f6e5;border-right:1px solid #a0a0a0;border-bottom:1px solid #a0a0a0;">染色车间</div>
<div class="c" style="left:428px;top:385px;width:95px;height:24px;line-height:25px;background:#e7f6e5;border-right:1px solid #a0a0a0;border-bottom:1px solid #a0a0a0;">剪毛1</div>
<div class="c" style="left:523px;top:385px;width:112px;height:24px;line-height:25px;background:#e7f6e5;border-right:1px solid #a0a0a0;border-bottom:1px solid #a0a0a0;">999</div>
<div class="c" style="left:635px;top:385px;width:260px;height:24px;line-height:25px;background:#e7f6e5;border-right:1px solid #a0a0a0;border-bottom:1px solid #a0a0a0;"></div>
<div style="left:0px;top:408px;width:40px;height:26px;background:#000"></div>
<div class="rh" style="left:1px;top:410px;width:38px;height:22px;background:#e7f6e5;line-height:22px;">17</div>
<div class="c" style="left:40px;top:409px;width:104px;height:24px;line-height:25px;background:#f5fcf4;border-right:1px solid #a0a0a0;border-bottom:1px solid #a0a0a0;">001</div>
<div class="c" style="left:144px;top:409px;width:98px;height:24px;line-height:25px;background:#f5fcf4;border-right:1px solid #a0a0a0;border-bottom:1px solid #a0a0a0;">爱招飞</div>
<div class="c" style="left:242px;top:409px;width:95px;height:24px;line-height:25px;background:#f5fcf4;border-right:1px solid #a0a0a0;border-bottom:1px solid #a0a0a0;">公卡</div>
<div class="c" style="left:337px;top:409px;width:91px;height:24px;line-height:25px;background:#f5fcf4;border-right:1px solid #a0a0a0;border-bottom:1px solid #a0a0a0;">染色车间</div>
<div class="c" style="left:428px;top:409px;width:95px;height:24px;line-height:25px;background:#f5fcf4;border-right:1px solid #a0a0a0;border-bottom:1px solid #a0a0a0;">磨毛1</div>
<div class="c" style="left:523px;top:409px;width:112px;height:24px;line-height:25px;background:#f5fcf4;border-right:1px solid #a0a0a0;border-bottom:1px solid #a0a0a0;">999</div>
<div class="c" style="left:635px;top:409px;width:260px;height:24px;line-height:25px;background:#f5fcf4;border-right:1px solid #a0a0a0;border-bottom:1px solid #a0a0a0;"></div>
<div style="left:0px;top:432px;width:40px;height:26px;background:#000"></div>
<div class="rh" style="left:1px;top:434px;width:38px;height:22px;background:#e7f6e5;line-height:22px;">18</div>
<div class="c" style="left:40px;top:433px;width:104px;height:24px;line-height:25px;background:#e7f6e5;border-right:1px solid #a0a0a0;border-bottom:1px solid #a0a0a0;">001</div>
<div class="c" style="left:144px;top:433px;width:98px;height:24px;line-height:25px;background:#e7f6e5;border-right:1px solid #a0a0a0;border-bottom:1px solid #a0a0a0;">爱招飞</div>
<div class="c" style="left:242px;top:433px;width:95px;height:24px;line-height:25px;background:#e7f6e5;border-right:1px solid #a0a0a0;border-bottom:1px solid #a0a0a0;">公卡</div>
<div class="c" style="left:337px;top:433px;width:91px;height:24px;line-height:25px;background:#e7f6e5;border-right:1px solid #a0a0a0;border-bottom:1px solid #a0a0a0;">染色车间</div>
<div class="c" style="left:428px;top:433px;width:95px;height:24px;line-height:25px;background:#e7f6e5;border-right:1px solid #a0a0a0;border-bottom:1px solid #a0a0a0;">火烧毛</div>
<div class="c" style="left:523px;top:433px;width:112px;height:24px;line-height:25px;background:#e7f6e5;border-right:1px solid #a0a0a0;border-bottom:1px solid #a0a0a0;">999</div>
<div class="c" style="left:635px;top:433px;width:260px;height:24px;line-height:25px;background:#e7f6e5;border-right:1px solid #a0a0a0;border-bottom:1px solid #a0a0a0;"></div>
<div style="left:0px;top:456px;width:40px;height:26px;background:#000"></div>
<div class="rh" style="left:1px;top:458px;width:38px;height:22px;background:#e7f6e5;line-height:22px;">19</div>
<div class="c" style="left:40px;top:457px;width:104px;height:24px;line-height:25px;background:#f5fcf4;border-right:1px solid #a0a0a0;border-bottom:1px solid #a0a0a0;">001</div>
<div class="c" style="left:144px;top:457px;width:98px;height:24px;line-height:25px;background:#f5fcf4;border-right:1px solid #a0a0a0;border-bottom:1px solid #a0a0a0;">爱招飞</div>
<div class="c" style="left:242px;top:457px;width:95px;height:24px;line-height:25px;background:#f5fcf4;border-right:1px solid #a0a0a0;border-bottom:1px solid #a0a0a0;">公卡</div>
<div class="c" style="left:337px;top:457px;width:91px;height:24px;line-height:25px;background:#f5fcf4;border-right:1px solid #a0a0a0;border-bottom:1px solid #a0a0a0;">染色车间</div>
<div class="c" style="left:428px;top:457px;width:95px;height:24px;line-height:25px;background:#f5fcf4;border-right:1px solid #a0a0a0;border-bottom:1px solid #a0a0a0;">环烘1</div>
<div class="c" style="left:523px;top:457px;width:112px;height:24px;line-height:25px;background:#f5fcf4;border-right:1px solid #a0a0a0;border-bottom:1px solid #a0a0a0;">999</div>
<div class="c" style="left:635px;top:457px;width:260px;height:24px;line-height:25px;background:#f5fcf4;border-right:1px solid #a0a0a0;border-bottom:1px solid #a0a0a0;"></div>
<div style="left:0px;top:480px;width:40px;height:26px;background:#000"></div>
<div class="rh" style="left:1px;top:482px;width:38px;height:22px;background:#e7f6e5;line-height:22px;">20</div>
<div class="c" style="left:40px;top:481px;width:104px;height:24px;line-height:25px;background:#e7f6e5;border-right:1px solid #a0a0a0;border-bottom:1px solid #a0a0a0;">001</div>
<div class="c" style="left:144px;top:481px;width:98px;height:24px;line-height:25px;background:#e7f6e5;border-right:1px solid #a0a0a0;border-bottom:1px solid #a0a0a0;">爱招飞</div>
<div class="c" style="left:242px;top:481px;width:95px;height:24px;line-height:25px;background:#e7f6e5;border-right:1px solid #a0a0a0;border-bottom:1px solid #a0a0a0;">公卡</div>
<div class="c" style="left:337px;top:481px;width:91px;height:24px;line-height:25px;background:#e7f6e5;border-right:1px solid #a0a0a0;border-bottom:1px solid #a0a0a0;">染色车间</div>
<div class="c" style="left:428px;top:481px;width:95px;height:24px;line-height:25px;background:#e7f6e5;border-right:1px solid #a0a0a0;border-bottom:1px solid #a0a0a0;">起绒2</div>
<div class="c" style="left:523px;top:481px;width:112px;height:24px;line-height:25px;background:#e7f6e5;border-right:1px solid #a0a0a0;border-bottom:1px solid #a0a0a0;">999</div>
<div class="c" style="left:635px;top:481px;width:260px;height:24px;line-height:25px;background:#e7f6e5;border-right:1px solid #a0a0a0;border-bottom:1px solid #a0a0a0;"></div>
<div style="left:0px;top:504px;width:40px;height:26px;background:#000"></div>
<div class="rh" style="left:1px;top:506px;width:38px;height:22px;background:#e7f6e5;line-height:22px;">21</div>
<div class="c" style="left:40px;top:505px;width:104px;height:24px;line-height:25px;background:#f5fcf4;border-right:1px solid #a0a0a0;border-bottom:1px solid #a0a0a0;">001</div>
<div class="c" style="left:144px;top:505px;width:98px;height:24px;line-height:25px;background:#f5fcf4;border-right:1px solid #a0a0a0;border-bottom:1px solid #a0a0a0;">爱招飞</div>
<div class="c" style="left:242px;top:505px;width:95px;height:24px;line-height:25px;background:#f5fcf4;border-right:1px solid #a0a0a0;border-bottom:1px solid #a0a0a0;">公卡</div>
<div class="c" style="left:337px;top:505px;width:91px;height:24px;line-height:25px;background:#f5fcf4;border-right:1px solid #a0a0a0;border-bottom:1px solid #a0a0a0;">染色车间</div>
<div class="c" style="left:428px;top:505px;width:95px;height:24px;line-height:25px;background:#f5fcf4;border-right:1px solid #a0a0a0;border-bottom:1px solid #a0a0a0;">铺布</div>
<div class="c" style="left:523px;top:505px;width:112px;height:24px;line-height:25px;background:#f5fcf4;border-right:1px solid #a0a0a0;border-bottom:1px solid #a0a0a0;">999</div>
<div class="c" style="left:635px;top:505px;width:260px;height:24px;line-height:25px;background:#f5fcf4;border-right:1px solid #a0a0a0;border-bottom:1px solid #a0a0a0;"></div>
<div style="left:0px;top:528px;width:40px;height:26px;background:#000"></div>
<div class="rh" style="left:1px;top:530px;width:38px;height:22px;background:#e7f6e5;line-height:22px;">22</div>
<div class="c" style="left:40px;top:529px;width:104px;height:24px;line-height:25px;background:#e7f6e5;border-right:1px solid #a0a0a0;border-bottom:1px solid #a0a0a0;">001</div>
<div class="c" style="left:144px;top:529px;width:98px;height:24px;line-height:25px;background:#e7f6e5;border-right:1px solid #a0a0a0;border-bottom:1px solid #a0a0a0;">爱招飞</div>
<div class="c" style="left:242px;top:529px;width:95px;height:24px;line-height:25px;background:#e7f6e5;border-right:1px solid #a0a0a0;border-bottom:1px solid #a0a0a0;">公卡</div>
<div class="c" style="left:337px;top:529px;width:91px;height:24px;line-height:25px;background:#e7f6e5;border-right:1px solid #a0a0a0;border-bottom:1px solid #a0a0a0;">染色车间</div>
<div class="c" style="left:428px;top:529px;width:95px;height:24px;line-height:25px;background:#e7f6e5;border-right:1px solid #a0a0a0;border-bottom:1px solid #a0a0a0;">成品打卷</div>
<div class="c" style="left:523px;top:529px;width:112px;height:24px;line-height:25px;background:#e7f6e5;border-right:1px solid #a0a0a0;border-bottom:1px solid #a0a0a0;">999</div>
<div class="c" style="left:635px;top:529px;width:260px;height:24px;line-height:25px;background:#e7f6e5;border-right:1px solid #a0a0a0;border-bottom:1px solid #a0a0a0;"></div>
<div style="left:0px;top:552px;width:40px;height:26px;background:#000"></div>
<div class="rh" style="left:1px;top:554px;width:38px;height:22px;background:#e7f6e5;line-height:22px;">23</div>
<div class="c" style="left:40px;top:553px;width:104px;height:24px;line-height:25px;background:#f5fcf4;border-right:1px solid #a0a0a0;border-bottom:1px solid #a0a0a0;">001</div>
<div class="c" style="left:144px;top:553px;width:98px;height:24px;line-height:25px;background:#f5fcf4;border-right:1px solid #a0a0a0;border-bottom:1px solid #a0a0a0;">爱招飞</div>
<div class="c" style="left:242px;top:553px;width:95px;height:24px;line-height:25px;background:#f5fcf4;border-right:1px solid #a0a0a0;border-bottom:1px solid #a0a0a0;">公卡</div>
<div class="c" style="left:337px;top:553px;width:91px;height:24px;line-height:25px;background:#f5fcf4;border-right:1px solid #a0a0a0;border-bottom:1px solid #a0a0a0;">染色车间</div>
<div class="c" style="left:428px;top:553px;width:95px;height:24px;line-height:25px;background:#f5fcf4;border-right:1px solid #a0a0a0;border-bottom:1px solid #a0a0a0;">成品打包</div>
<div class="c" style="left:523px;top:553px;width:112px;height:24px;line-height:25px;background:#f5fcf4;border-right:1px solid #a0a0a0;border-bottom:1px solid #a0a0a0;">999</div>
<div class="c" style="left:635px;top:553px;width:260px;height:24px;line-height:25px;background:#f5fcf4;border-right:1px solid #a0a0a0;border-bottom:1px solid #a0a0a0;"></div>
<div style="left:0px;top:576px;width:40px;height:26px;background:#000"></div>
<div class="rh" style="left:1px;top:578px;width:38px;height:22px;background:#e7f6e5;line-height:22px;">24</div>
<div class="c" style="left:40px;top:577px;width:104px;height:24px;line-height:25px;background:#e7f6e5;border-right:1px solid #a0a0a0;border-bottom:1px solid #a0a0a0;">001</div>
<div class="c" style="left:144px;top:577px;width:98px;height:24px;line-height:25px;background:#e7f6e5;border-right:1px solid #a0a0a0;border-bottom:1px solid #a0a0a0;">爱招飞</div>
<div class="c" style="left:242px;top:577px;width:95px;height:24px;line-height:25px;background:#e7f6e5;border-right:1px solid #a0a0a0;border-bottom:1px solid #a0a0a0;">公卡</div>
<div class="c" style="left:337px;top:577px;width:91px;height:24px;line-height:25px;background:#e7f6e5;border-right:1px solid #a0a0a0;border-bottom:1px solid #a0a0a0;">染色车间</div>
<div class="c" style="left:428px;top:577px;width:95px;height:24px;line-height:25px;background:#e7f6e5;border-right:1px solid #a0a0a0;border-bottom:1px solid #a0a0a0;">定型2</div>
<div class="c" style="left:523px;top:577px;width:112px;height:24px;line-height:25px;background:#e7f6e5;border-right:1px solid #a0a0a0;border-bottom:1px solid #a0a0a0;">999</div>
<div class="c" style="left:635px;top:577px;width:260px;height:24px;line-height:25px;background:#e7f6e5;border-right:1px solid #a0a0a0;border-bottom:1px solid #a0a0a0;"></div>
<div style="left:0px;top:600px;width:40px;height:26px;background:#000"></div>
<div class="rh" style="left:1px;top:602px;width:38px;height:22px;background:#e7f6e5;line-height:22px;">25</div>
<div class="c" style="left:40px;top:601px;width:104px;height:24px;line-height:25px;background:#f5fcf4;border-right:1px solid #a0a0a0;border-bottom:1px solid #a0a0a0;">001</div>
<div class="c" style="left:144px;top:601px;width:98px;height:24px;line-height:25px;background:#f5fcf4;border-right:1px solid #a0a0a0;border-bottom:1px solid #a0a0a0;">爱招飞</div>
<div class="c" style="left:242px;top:601px;width:95px;height:24px;line-height:25px;background:#f5fcf4;border-right:1px solid #a0a0a0;border-bottom:1px solid #a0a0a0;">公卡</div>
<div class="c" style="left:337px;top:601px;width:91px;height:24px;line-height:25px;background:#f5fcf4;border-right:1px solid #a0a0a0;border-bottom:1px solid #a0a0a0;">染色车间</div>
<div class="c" style="left:428px;top:601px;width:95px;height:24px;line-height:25px;background:#f5fcf4;border-right:1px solid #a0a0a0;border-bottom:1px solid #a0a0a0;">磨毛2</div>
<div class="c" style="left:523px;top:601px;width:112px;height:24px;line-height:25px;background:#f5fcf4;border-right:1px solid #a0a0a0;border-bottom:1px solid #a0a0a0;">999</div>
<div class="c" style="left:635px;top:601px;width:260px;height:24px;line-height:25px;background:#f5fcf4;border-right:1px solid #a0a0a0;border-bottom:1px solid #a0a0a0;"></div>
<div style="left:0px;top:624px;width:40px;height:26px;background:#000"></div>
<div class="rh" style="left:1px;top:626px;width:38px;height:22px;background:#e7f6e5;line-height:22px;">26</div>
<div class="c" style="left:40px;top:625px;width:104px;height:24px;line-height:25px;background:#e7f6e5;border-right:1px solid #a0a0a0;border-bottom:1px solid #a0a0a0;">001</div>
<div class="c" style="left:144px;top:625px;width:98px;height:24px;line-height:25px;background:#e7f6e5;border-right:1px solid #a0a0a0;border-bottom:1px solid #a0a0a0;">爱招飞</div>
<div class="c" style="left:242px;top:625px;width:95px;height:24px;line-height:25px;background:#e7f6e5;border-right:1px solid #a0a0a0;border-bottom:1px solid #a0a0a0;">公卡</div>
<div class="c" style="left:337px;top:625px;width:91px;height:24px;line-height:25px;background:#e7f6e5;border-right:1px solid #a0a0a0;border-bottom:1px solid #a0a0a0;">染色车间</div>
<div class="c" style="left:428px;top:625px;width:95px;height:24px;line-height:25px;background:#e7f6e5;border-right:1px solid #a0a0a0;border-bottom:1px solid #a0a0a0;">定型1</div>
<div class="c" style="left:523px;top:625px;width:112px;height:24px;line-height:25px;background:#e7f6e5;border-right:1px solid #a0a0a0;border-bottom:1px solid #a0a0a0;">999</div>
<div class="c" style="left:635px;top:625px;width:260px;height:24px;line-height:25px;background:#e7f6e5;border-right:1px solid #a0a0a0;border-bottom:1px solid #a0a0a0;"></div>
<div style="left:0px;top:648px;width:40px;height:26px;background:#000"></div>
<div class="rh" style="left:1px;top:650px;width:38px;height:22px;background:#e7f6e5;line-height:22px;">27</div>
<div class="c" style="left:40px;top:649px;width:104px;height:24px;line-height:25px;background:#f5fcf4;border-right:1px solid #a0a0a0;border-bottom:1px solid #a0a0a0;">001</div>
<div class="c" style="left:144px;top:649px;width:98px;height:24px;line-height:25px;background:#f5fcf4;border-right:1px solid #a0a0a0;border-bottom:1px solid #a0a0a0;">爱招飞</div>
<div class="c" style="left:242px;top:649px;width:95px;height:24px;line-height:25px;background:#f5fcf4;border-right:1px solid #a0a0a0;border-bottom:1px solid #a0a0a0;">公卡</div>
<div class="c" style="left:337px;top:649px;width:91px;height:24px;line-height:25px;background:#f5fcf4;border-right:1px solid #a0a0a0;border-bottom:1px solid #a0a0a0;">染色车间</div>
<div class="c" style="left:428px;top:649px;width:95px;height:24px;line-height:25px;background:#f5fcf4;border-right:1px solid #a0a0a0;border-bottom:1px solid #a0a0a0;">压光预缩</div>
<div class="c" style="left:523px;top:649px;width:112px;height:24px;line-height:25px;background:#f5fcf4;border-right:1px solid #a0a0a0;border-bottom:1px solid #a0a0a0;">999</div>
<div class="c" style="left:635px;top:649px;width:260px;height:24px;line-height:25px;background:#f5fcf4;border-right:1px solid #a0a0a0;border-bottom:1px solid #a0a0a0;"></div>
<div style="left:0px;top:672px;width:40px;height:26px;background:#000"></div>
<div class="rh" style="left:1px;top:674px;width:38px;height:22px;background:#e7f6e5;line-height:22px;">28</div>
<div class="c" style="left:40px;top:673px;width:104px;height:24px;line-height:25px;background:#e7f6e5;border-right:1px solid #a0a0a0;border-bottom:1px solid #a0a0a0;">001</div>
<div class="c" style="left:144px;top:673px;width:98px;height:24px;line-height:25px;background:#e7f6e5;border-right:1px solid #a0a0a0;border-bottom:1px solid #a0a0a0;">爱招飞</div>
<div class="c" style="left:242px;top:673px;width:95px;height:24px;line-height:25px;background:#e7f6e5;border-right:1px solid #a0a0a0;border-bottom:1px solid #a0a0a0;">公卡</div>
<div class="c" style="left:337px;top:673px;width:91px;height:24px;line-height:25px;background:#e7f6e5;border-right:1px solid #a0a0a0;border-bottom:1px solid #a0a0a0;">染色车间</div>
<div class="c" style="left:428px;top:673px;width:95px;height:24px;line-height:25px;background:#e7f6e5;border-right:1px solid #a0a0a0;border-bottom:1px solid #a0a0a0;">剪毛2</div>
<div class="c" style="left:523px;top:673px;width:112px;height:24px;line-height:25px;background:#e7f6e5;border-right:1px solid #a0a0a0;border-bottom:1px solid #a0a0a0;">999</div>
<div class="c" style="left:635px;top:673px;width:260px;height:24px;line-height:25px;background:#e7f6e5;border-right:1px solid #a0a0a0;border-bottom:1px solid #a0a0a0;"></div>
<div style="left:0px;top:696px;width:40px;height:26px;background:#000"></div>
<div class="rh" style="left:1px;top:698px;width:38px;height:22px;background:#e7f6e5;line-height:22px;">29</div>
<div class="c" style="left:40px;top:697px;width:104px;height:24px;line-height:25px;background:#f5fcf4;border-right:1px solid #a0a0a0;border-bottom:1px solid #a0a0a0;">001</div>
<div class="c" style="left:144px;top:697px;width:98px;height:24px;line-height:25px;background:#f5fcf4;border-right:1px solid #a0a0a0;border-bottom:1px solid #a0a0a0;">爱招飞</div>
<div class="c" style="left:242px;top:697px;width:95px;height:24px;line-height:25px;background:#f5fcf4;border-right:1px solid #a0a0a0;border-bottom:1px solid #a0a0a0;">公卡</div>
<div class="c" style="left:337px;top:697px;width:91px;height:24px;line-height:25px;background:#f5fcf4;border-right:1px solid #a0a0a0;border-bottom:1px solid #a0a0a0;">染色车间</div>
<div class="c" style="left:428px;top:697px;width:95px;height:24px;line-height:25px;background:#f5fcf4;border-right:1px solid #a0a0a0;border-bottom:1px solid #a0a0a0;"></div>
<div class="c" style="left:523px;top:697px;width:112px;height:24px;line-height:25px;background:#f5fcf4;border-right:1px solid #a0a0a0;border-bottom:1px solid #a0a0a0;">999</div>
<div class="c" style="left:635px;top:697px;width:260px;height:24px;line-height:25px;background:#f5fcf4;border-right:1px solid #a0a0a0;border-bottom:1px solid #a0a0a0;"></div>
</div>
<div class="vs" style="left:1695px;top:85px;width:17px;height:722px">
<div class="sb" style="left:0;top:0;width:15px;height:15px"><svg width="15" height="15" viewBox="0 0 15 15"><path d="M2.5 10.5 L7.5 5 L12.5 10.5 Z" fill="#000"/></svg></div>
<div class="sb" style="left:0;top:16px;width:15px;height:213px;border-top-width:2px"></div>
<div class="sb" style="left:0;top:705px;width:15px;height:15px"><svg width="15" height="15" viewBox="0 0 15 15"><path d="M2.5 4.5 L7.5 10 L12.5 4.5 Z" fill="#000"/></svg></div>
</div>
</body></html>
